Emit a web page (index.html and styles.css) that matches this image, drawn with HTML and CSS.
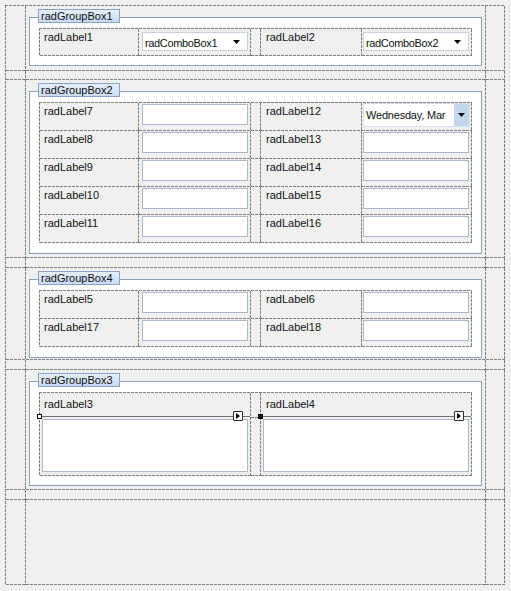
FILE: index.html
```html
<!DOCTYPE html>
<html>
<head>
<meta charset="utf-8">
<link rel="stylesheet" href="styles.css">
</head>
<body>
<div class="layout">
  <!-- row 1 -->
  <div class="cell"></div>
  <div class="cell">
    <div class="gb">
      <div class="gb-head">radGroupBox1</div>
      <div class="gb-frame pb9">
        <div class="tbl">
          <div class="c w99 h27 lbl">radLabel1</div>
          <div class="c w112 h27"><div class="combo l3"><span>radComboBox1</span><svg class="arr" width="7" height="4" viewBox="0 0 7 4"><path d="M0 0H7L3.5 4Z" fill="#000"/></svg></div></div>
          <div class="c w10 h27"></div>
          <div class="c w101 h27 lbl r">radLabel2</div>
          <div class="c w110 h27"><div class="combo l1"><span>radComboBox2</span><svg class="arr" width="7" height="4" viewBox="0 0 7 4"><path d="M0 0H7L3.5 4Z" fill="#000"/></svg></div></div>
        </div>
      </div>
    </div>
  </div>
  <div class="cell"></div>

  <!-- gap -->
  <div class="cell"></div><div class="cell"></div><div class="cell"></div>

  <!-- row 2 -->
  <div class="cell"></div>
  <div class="cell">
    <div class="gb">
      <div class="gb-head">radGroupBox2</div>
      <div class="gb-frame pb10">
        <div class="tbl">
          <div class="c w99 lbl">radLabel7</div>
          <div class="c w112"><div class="tb l3"></div></div>
          <div class="c w10"></div>
          <div class="c w101 lbl r">radLabel12</div>
          <div class="c w110"><div class="date"><span>Wednesday, Mar</span><div class="dbtn"><svg width="7" height="4" viewBox="0 0 7 4"><path d="M0 0H7L3.5 4Z" fill="#000"/></svg></div></div></div>

          <div class="c w99 lbl">radLabel8</div>
          <div class="c w112"><div class="tb l3"></div></div>
          <div class="c w10"></div>
          <div class="c w101 lbl r">radLabel13</div>
          <div class="c w110"><div class="tb l1"></div></div>

          <div class="c w99 lbl">radLabel9</div>
          <div class="c w112"><div class="tb l3"></div></div>
          <div class="c w10"></div>
          <div class="c w101 lbl r">radLabel14</div>
          <div class="c w110"><div class="tb l1"></div></div>

          <div class="c w99 lbl">radLabel10</div>
          <div class="c w112"><div class="tb l3"></div></div>
          <div class="c w10"></div>
          <div class="c w101 lbl r">radLabel15</div>
          <div class="c w110"><div class="tb l1"></div></div>

          <div class="c w99 lbl">radLabel11</div>
          <div class="c w112"><div class="tb l3"></div></div>
          <div class="c w10"></div>
          <div class="c w101 lbl r">radLabel16</div>
          <div class="c w110"><div class="tb l1"></div></div>
        </div>
      </div>
    </div>
  </div>
  <div class="cell"></div>

  <!-- gap -->
  <div class="cell"></div><div class="cell"></div><div class="cell"></div>

  <!-- row 3 -->
  <div class="cell"></div>
  <div class="cell">
    <div class="gb">
      <div class="gb-head">radGroupBox4</div>
      <div class="gb-frame pb10">
        <div class="tbl">
          <div class="c w99 lbl">radLabel5</div>
          <div class="c w112"><div class="tb l3"></div></div>
          <div class="c w10"></div>
          <div class="c w101 lbl r">radLabel6</div>
          <div class="c w110"><div class="tb l1"></div></div>

          <div class="c w99 lbl">radLabel17</div>
          <div class="c w112"><div class="tb l3"></div></div>
          <div class="c w10"></div>
          <div class="c w101 lbl r">radLabel18</div>
          <div class="c w110"><div class="tb l1"></div></div>
        </div>
      </div>
    </div>
  </div>
  <div class="cell"></div>

  <!-- gap -->
  <div class="cell"></div><div class="cell"></div><div class="cell"></div>

  <!-- row 4 -->
  <div class="cell"></div>
  <div class="cell">
    <div class="gb">
      <div class="gb-head">radGroupBox3</div>
      <div class="gb-frame pb9">
        <div class="tbl tbl2">
          <div class="c big">
            <div class="big-lbl">radLabel3</div>
            <div class="sel">
              <span class="handle white"></span>
              <span class="tag"><svg width="4" height="6" viewBox="0 0 4 6"><path d="M0 0L4 3L0 6Z" fill="#000"/></svg></span>
              <div class="tb big-tb"></div>
            </div>
          </div>
          <div class="c w10 big"><div class="gapline"></div></div>
          <div class="c big">
            <div class="big-lbl r">radLabel4</div>
            <div class="sel">
              <span class="handle black"></span>
              <span class="tag"><svg width="4" height="6" viewBox="0 0 4 6"><path d="M0 0L4 3L0 6Z" fill="#000"/></svg></span>
              <div class="tb big-tb"></div>
            </div>
          </div>
        </div>
      </div>
    </div>
  </div>
  <div class="cell"></div>

  <!-- gap -->
  <div class="cell"></div><div class="cell"></div><div class="cell"></div>

  <!-- bottom -->
  <div class="cell"></div><div class="cell"></div><div class="cell"></div>
</div>
</body>
</html>
```

FILE: styles.css
```css
* { box-sizing: border-box; }
:root {
  --dv: repeating-linear-gradient(to bottom, #7f7f7f 0 3px, transparent 3px 4px);
  --dh: repeating-linear-gradient(to right, #7f7f7f 0 3px, transparent 3px 4px);
}
html, body { margin: 0; padding: 0; background: #f0f0f0; }
body {
  font-family: "Liberation Sans", Arial, sans-serif;
  font-size: 11px;
  color: #111;
  width: 511px;
  height: 591px;
  overflow: hidden;
}

.layout {
  margin: 5px 0 0 5px;
  display: grid;
  grid-template-columns: 20px 460px 19px;
  grid-template-rows: 65px 9px 178px 10px 92px 10px 120px 10px 85px;
  width: 500px;
  border-top: 1px solid transparent;
  border-left: 1px solid transparent;
  background:
    var(--dh) left top / 100% 1px no-repeat border-box,
    var(--dv) left top / 1px 100% no-repeat border-box;
}
.cell {
  border-right: 1px solid transparent;
  border-bottom: 1px solid transparent;
  min-width: 0;
  background:
    var(--dv) right top / 1px 100% no-repeat border-box,
    var(--dh) left bottom / 100% 1px no-repeat border-box;
}

/* group box */
.gb {
  position: relative;
  margin: 3px 3px 0 3px;
  padding-top: 8px;
}
.gb-head {
  position: absolute;
  left: 9px;
  top: 0;
  height: 14px;
  line-height: 12px;
  padding: 0 6px 0 2px;
  border: 1px solid #86a3cf;
  background: linear-gradient(#e6effb, #c9dbf3);
  color: #111;
  white-space: nowrap;
}
.gb-frame {
  border: 1px solid #8e9fb8;
  background: #fff;
  padding: 10px 9px 9px 9px;
}
.gb-frame.pb10 { padding-bottom: 10px; }
.gb-frame.pb9 { padding-bottom: 9px; }

/* inner table */
.tbl {
  display: grid;
  grid-template-columns: 99px 112px 10px 101px 110px;
  border-top: 1px solid transparent;
  border-left: 1px solid transparent;
  background:
    var(--dh) left top / 100% 1px no-repeat border-box,
    var(--dv) left top / 1px 100% no-repeat border-box,
    #f0f0f0;
}
.tbl2 {
  grid-template-columns: 211px 10px 211px;
}
.c {
  height: 28px;
  border-right: 1px solid transparent;
  border-bottom: 1px solid transparent;
  min-width: 0;
  background:
    var(--dv) right top / 1px 100% no-repeat border-box,
    var(--dh) left bottom / 100% 1px no-repeat border-box;
}
.c.h27 { height: 27px; }
.lbl {
  padding: 2px 0 0 4px;
  line-height: 13px;
  white-space: nowrap;
}
.lbl.r { padding-left: 5px; }

/* text box */
.tb {
  width: 106px;
  height: 21px;
  margin-top: 1px;
  border: 1px solid #abb9cd;
  background: #fff;
}
.l3 { margin-left: 3px; }
.l1 { margin-left: 1px; }

/* combo */
.combo {
  width: 106px;
  height: 19px;
  margin-top: 3px;
  border: 1px solid #c7d1de;
  background: #fff;
  display: flex;
  align-items: center;
  justify-content: space-between;
  padding: 2px 7px 0 2px;
  letter-spacing: -0.35px;
  white-space: nowrap;
}
.combo .arr { flex: none; margin-top: -1px; }

/* date picker */
.date {
  width: 107px;
  height: 24px;
  margin: 0 0 0 1px;
  border: 1px solid #d4deec;
  background: #fff;
  display: flex;
  align-items: stretch;
  overflow: hidden;
}
.date span {
  flex: 1;
  min-width: 0;
  overflow: hidden;
  white-space: nowrap;
  padding: 5px 0 0 2px;
  letter-spacing: -0.2px;
}
.dbtn {
  flex: none;
  width: 15px;
  background: #c5d7ef;
  display: flex;
  align-items: center;
  justify-content: center;
}

/* group box 3 cells */
.c.big {
  height: 83px;
  position: relative;
}
.big-lbl {
  padding: 5px 0 0 4px;
  height: 23px;
  line-height: 13px;
}
.big-lbl.r { padding-left: 5px; }
.sel {
  position: relative;
  border-top: 1px solid #6f6f6f;
  padding: 2px 2px 0 2px;
}
.big-tb {
  width: 206px;
  height: 53px;
  margin: 0;
}
.handle {
  position: absolute;
  top: -3px;
  left: -3px;
  width: 5px;
  height: 5px;
  border: 1px solid #000;
}
.handle.white { background: #fff; }
.handle.black { background: #000; }
.tag {
  position: absolute;
  top: -6px;
  right: 7px;
  width: 10px;
  height: 10px;
  border: 1px solid #2a2a2a;
  border-radius: 1px;
  background: #fff;
  display: flex;
  align-items: center;
  justify-content: center;
}
.gapline {
  margin-top: 24px;
  height: 1px;
  background: var(--dh);
}
```
